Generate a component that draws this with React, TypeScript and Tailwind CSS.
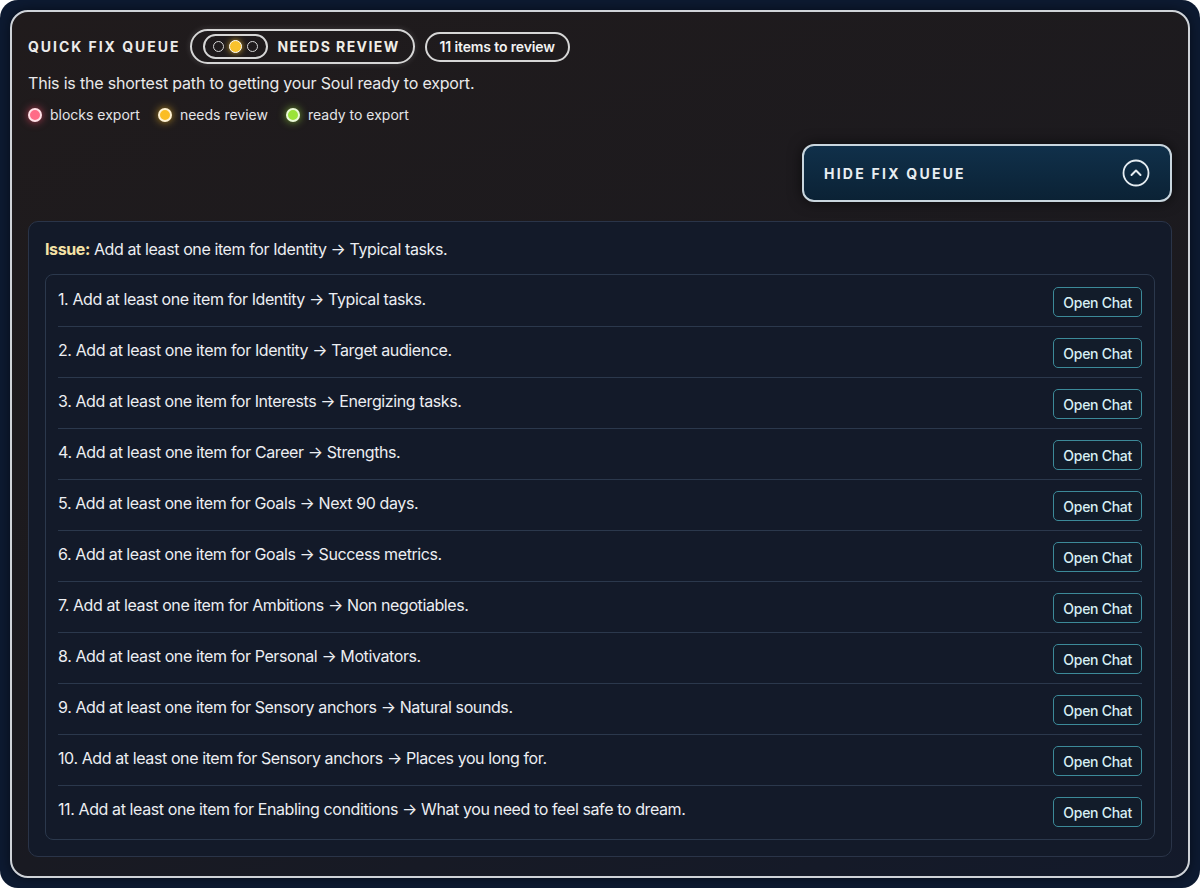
import React from "react";

const items = [
  "Add at least one item for Identity → Typical tasks.",
  "Add at least one item for Identity → Target audience.",
  "Add at least one item for Interests → Energizing tasks.",
  "Add at least one item for Career → Strengths.",
  "Add at least one item for Goals → Next 90 days.",
  "Add at least one item for Goals → Success metrics.",
  "Add at least one item for Ambitions → Non negotiables.",
  "Add at least one item for Personal → Motivators.",
  "Add at least one item for Sensory anchors → Natural sounds.",
  "Add at least one item for Sensory anchors → Places you long for.",
  "Add at least one item for Enabling conditions → What you need to feel safe to dream.",
];

function LegendDot({ color, glow, label }: { color: string; glow: string; label: string }) {
  return (
    <div className="flex items-center gap-2">
      <span className={`h-[14px] w-[14px] rounded-full border-2 border-white/80 ${color} ${glow}`} />
      <span className="text-[14px] text-[#e4e4e7]">{label}</span>
    </div>
  );
}

export default function App() {
  return (
    <div className="h-[888px] w-[1200px] bg-white font-['Inter',sans-serif]">
      <div className="h-full w-full rounded-[18px] bg-[#0d1a31] p-[10px]">
        <div className="flex h-full flex-col rounded-[18px] border-2 border-[#cfd3d8] bg-[linear-gradient(160deg,#201b1c_0%,#1b1a1f_55%,#131a2b_100%)] px-4 pt-[17px] shadow-[0_0_12px_rgba(0,0,0,0.5)]">
          {/* Header */}
          <div className="flex items-center gap-[10px]">
            <span className="text-[14px] font-bold tracking-[0.14em] text-[#ecebea]">QUICK FIX QUEUE</span>
            <div className="flex h-[35px] items-center gap-[9px] rounded-full border-2 border-[#d6d6d6] pl-[11px] pr-[13px] shadow-[0_0_6px_rgba(255,255,255,0.15)]">
              <div className="flex h-[25px] items-center gap-[5px] rounded-full border-2 border-[#d6d6d6] px-[8px]">
                <span className="h-[11px] w-[11px] rounded-full border-[1.5px] border-[#d6d6d6]" />
                <span className="h-[13px] w-[13px] rounded-full border-[1.5px] border-white bg-[#f8c22e] shadow-[0_0_6px_rgba(248,194,46,0.8)]" />
                <span className="h-[11px] w-[11px] rounded-full border-[1.5px] border-[#d6d6d6]" />
              </div>
              <span className="text-[14px] font-bold tracking-[0.1em] text-[#f0ede6]">NEEDS REVIEW</span>
            </div>
            <span className="flex h-[30px] items-center rounded-full border-2 border-[#d6d6d6] px-[13px] text-[14px] font-semibold tracking-[-0.01em] text-[#f2f2f2]">
              11 items to review
            </span>
          </div>

          <p className="mt-[7px] text-[16px] leading-6 tracking-[-0.012em] text-[#e9e9ea]">
            This is the shortest path to getting your Soul ready to export.
          </p>

          <div className="mt-[9px] flex items-center gap-[18px]">
            <LegendDot color="bg-[#ff6b86]" glow="shadow-[0_0_8px_rgba(255,80,110,0.7)]" label="blocks export" />
            <LegendDot color="bg-[#fbbd23]" glow="shadow-[0_0_8px_rgba(251,189,35,0.7)]" label="needs review" />
            <LegendDot color="bg-[#9be33a]" glow="shadow-[0_0_8px_rgba(155,227,58,0.7)]" label="ready to export" />
          </div>

          <div className="mt-[19px] flex justify-end">
            <button className="flex h-[58px] w-[370px] shrink-0 items-center justify-between rounded-[12px] border-2 border-[#c9d6de] bg-[linear-gradient(180deg,#10304a_0%,#0b2235_100%)] pl-[20px] pr-[20px] shadow-[0_0_14px_rgba(0,0,0,0.6)]">
              <span className="text-[14px] font-bold tracking-[0.16em] text-[#e8eef2]">HIDE FIX QUEUE</span>
              <svg width="28" height="28" viewBox="0 0 28 28" fill="none">
                <circle cx="14" cy="14" r="12.5" stroke="#e6edf2" strokeWidth="1.8" />
                <path d="M9.5 16 L14 11.5 L18.5 16" stroke="#e6edf2" strokeWidth="2" strokeLinecap="round" strokeLinejoin="round" />
              </svg>
            </button>
          </div>

          {/* Issue card */}
          <div className="mt-[19px] rounded-[10px] border border-[#2a3448] bg-[#131a29] px-4 pb-4 pt-[15px]">
            <p className="text-[16px] leading-6 tracking-[-0.025em] text-[#eceef2]">
              <span className="font-bold text-[#f5e2a6]">Issue:</span> Add at least one item for Identity → Typical tasks.
            </p>
            <div className="mt-[13px] rounded-[8px] border border-[#2b384c] bg-[#131a29] px-3 pt-[1px]">
              {items.map((item, i) => (
                <div
                  key={i}
                  className={`flex items-start justify-between pb-[9px] pt-[11px] ${
                    i < items.length - 1 ? "border-b border-[#2b384c]" : "pb-[12px]"
                  }`}
                >
                  <span className="text-[16px] leading-6 tracking-[-0.025em] text-[#eceef2]">
                    {i + 1}. {item}
                  </span>
                  <button className="flex h-[30px] items-center rounded-[5px] border border-[#3c8a99] bg-[#121c2a] px-[9px] text-[14px] font-medium tracking-[-0.02em] text-[#d7eff4]">
                    Open Chat
                  </button>
                </div>
              ))}
            </div>
          </div>
        </div>
      </div>
    </div>
  );
}
